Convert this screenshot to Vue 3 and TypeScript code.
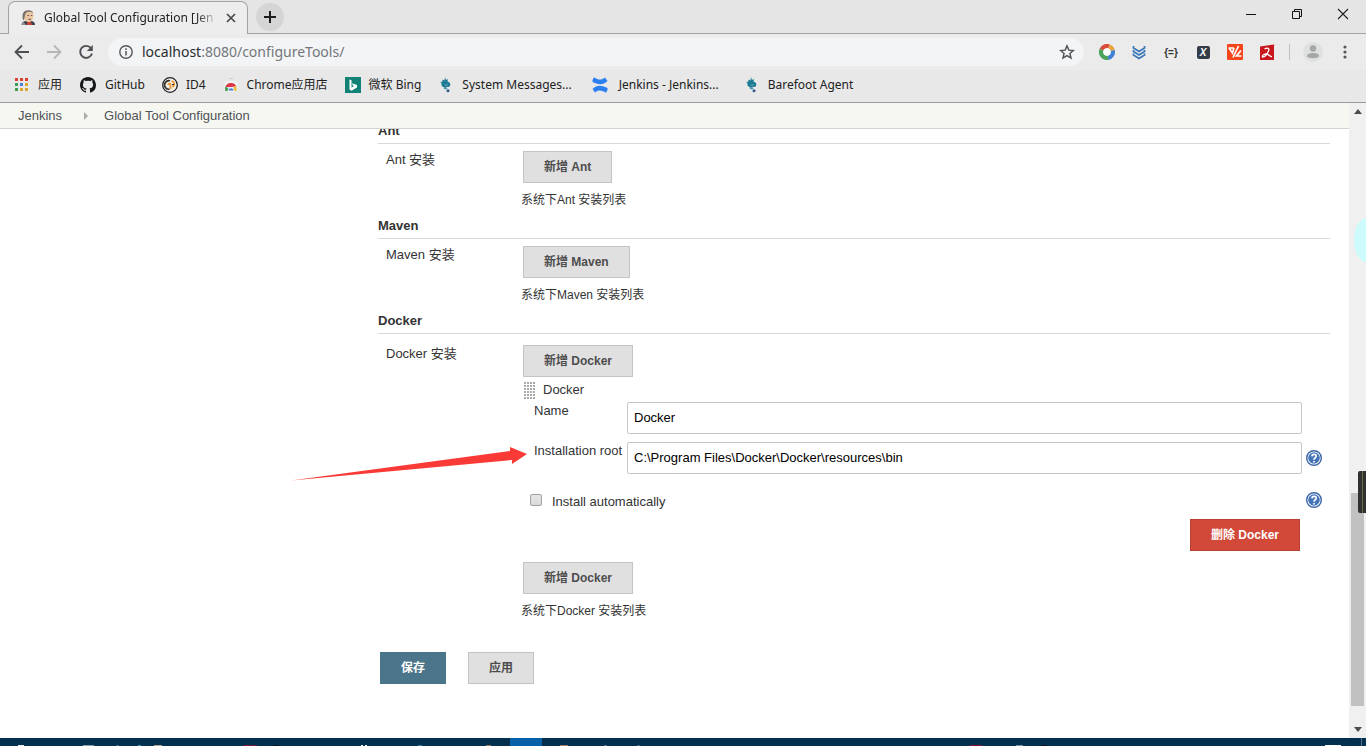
<script setup lang="ts">
import { ref } from 'vue'

interface Bookmark {
  icon: string
  label: string
  slot: string
}

interface TaskMark {
  left: number
  width: number
  color: string
}

const bookmarks: Bookmark[] = [
  { icon: 'apps', label: '应用', slot: 'slot-s' },
  { icon: 'github', label: 'GitHub', slot: 'slot-m' },
  { icon: 'id4', label: 'ID4', slot: 'slot-s' },
  { icon: 'store', label: 'Chrome应用店', slot: 'slot-s' },
  { icon: 'bing', label: '微软 Bing', slot: 'slot-s' },
  { icon: 'barefoot', label: 'System Messages...', slot: 'slot-s' },
  { icon: 'confluence', label: 'Jenkins - Jenkins...', slot: 'slot-l' },
  { icon: 'barefoot', label: 'Barefoot Agent', slot: 'slot-s' },
]

const appColors = ['#d93f35', '#d93f35', '#d93f35', '#3f9a52', '#4a7fe0', '#e0a52c', '#3f9a52', '#e0a52c', '#e0a52c']

const simpleTools = ['Ant', 'Maven']

const taskMarks: TaskMark[] = [
  { left: 1.3, width: 6, color: '#e8eef4' },
  { left: 6.1, width: 11, color: '#8d9daa' },
  { left: 8.5, width: 3, color: '#3f6a8e' },
  { left: 10.1, width: 3, color: '#3e8fc4' },
  { left: 11.3, width: 8, color: '#b3a58c' },
  { left: 17.8, width: 14, color: '#7a1638' },
  { left: 20, width: 6, color: '#07111c' },
  { left: 26.4, width: 2, color: '#ffffff' },
  { left: 26.7, width: 2, color: '#ffffff' },
  { left: 30.6, width: 4, color: '#3a7fb0' },
  { left: 35.6, width: 5, color: '#9a7a5c' },
  { left: 41, width: 8, color: '#a07a6a' },
  { left: 44.2, width: 3, color: '#5d6f80' },
  { left: 46.6, width: 3, color: '#3f6a8e' },
  { left: 71, width: 12, color: '#8a1034' },
  { left: 74.4, width: 7, color: '#7f93a5' },
  { left: 76.2, width: 6, color: '#0a0f18' },
  { left: 97, width: 16, color: '#ffffff' },
]

const name = ref('Docker')
const root = ref('C:\\Program Files\\Docker\\Docker\\resources\\bin')
const auto = ref(false)
</script>

<template>
  <div class="window">
    <header class="chrome">
      <div class="tabs">
        <div class="tab">
          <svg class="favicon" viewBox="0 0 16 16" width="16" height="16" aria-hidden="true">
            <path d="M2 15c0-3 2-4 4-4l5 0c2 0 4 1 4 4z" fill="#3b3f4a" />
            <path d="M7 12h4l1 3H7z" fill="#c8433c" />
            <path d="M3 6C2 2 6 0 9 .5c4 .5 5 3 4.500 6C13 10 11.500 12 9 12 6 12 4 10 3.500 8z" fill="#e9c7a4" />
            <path d="M3 10C1.500 3 4 .3 8.500.3c2.500 0 4 1 4.800 2.700C10 1.300 7 1.500 5.500 3.500c-.8 1.500-.5 3-1.200 4.500L4 10z" fill="#77706a" />
            <path d="M7.500 5.500h1.500M11 5.500h1.200M8.500 9.300h2.500" stroke="#5a3d31" stroke-width=".9" />
            <path d="M1 15l2-4 3 4z" fill="#8d9197" />
          </svg>
          <span class="tab-title">Global Tool Configuration [Jen</span>
          <button class="icon-btn tab-close" aria-label="关闭标签页">
            <svg viewBox="0 0 10 10" width="10" height="10"><path d="M1 1l8 8M9 1L1 9" stroke="#45484b" stroke-width="1.700" /></svg>
          </button>
        </div>
        <button class="icon-btn new-tab" aria-label="新标签页">
          <svg viewBox="0 0 12 12" width="12" height="12"><path d="M6 0v12M0 6h12" stroke="#1c1c1c" stroke-width="2" /></svg>
        </button>
        <div class="window-controls">
          <button class="icon-btn" aria-label="最小化">
            <svg viewBox="0 0 12 12" width="12" height="12"><path d="M1 6.500h10" stroke="#111" /></svg>
          </button>
          <button class="icon-btn" aria-label="还原">
            <svg viewBox="0 0 12 12" width="12" height="12"><path d="M1.500 3.500h7v7h-7zM3.500 3V1.500h7v7H9" fill="none" stroke="#111" /></svg>
          </button>
          <button class="icon-btn" aria-label="关闭">
            <svg viewBox="0 0 12 12" width="12" height="12"><path d="M1 1l10 10M11 1L1 11" stroke="#222" stroke-width="1.100" /></svg>
          </button>
        </div>
      </div>

      <div class="toolbar">
        <button class="icon-btn" aria-label="后退">
          <svg viewBox="0 0 16 16" width="16" height="16"><path d="M15 8H2M8 1.500L1.500 8 8 14.500" fill="none" stroke="#4d5054" stroke-width="1.800" /></svg>
        </button>
        <button class="icon-btn" aria-label="前进">
          <svg viewBox="0 0 16 16" width="16" height="16"><path d="M1 8h13M8 1.500L14.500 8 8 14.500" fill="none" stroke="#b4b6b8" stroke-width="1.800" /></svg>
        </button>
        <button class="icon-btn" aria-label="重新加载">
          <svg viewBox="0 0 16 16" width="16" height="16">
            <path d="M13 4.200A6 6 0 1 0 14 9.500" fill="none" stroke="#4d5054" stroke-width="1.900" />
            <path d="M14.800 1v6H8.800z" fill="#4d5054" />
          </svg>
        </button>
        <div class="address">
          <svg viewBox="0 0 14 14" width="14" height="14" aria-hidden="true">
            <circle cx="7" cy="7" r="6.200" fill="none" stroke="#55585c" stroke-width="1.400" />
            <path d="M7 6v4.500M7 3.300v1.600" stroke="#55585c" stroke-width="1.500" />
          </svg>
          <span class="url"><span class="host">localhost</span>:8080/configureTools/</span>
          <button class="icon-btn star" aria-label="为此网页添加书签">
            <svg viewBox="0 0 16 16" width="16" height="16"><path d="M8 1.800l1.800 4.300 4.600.4-3.500 3 1.100 4.500L8 11.600 4 14l1.100-4.500-3.500-3 4.600-.4z" fill="none" stroke="#4d5054" stroke-width="1.400" /></svg>
          </button>
        </div>
        <div class="extensions">
          <button class="icon-btn" aria-label="彩色圆环扩展">
            <svg viewBox="0 0 16 16" width="16" height="16" fill="none" stroke-width="4.500">
              <path d="M2.700 5.600A5.800 5.800 0 0 1 10 2.500" stroke="#d94b3b" />
              <path d="M10 2.500A5.800 5.800 0 0 1 13.600 6.500" stroke="#e9a23a" />
              <path d="M13.600 6.500A5.800 5.800 0 0 1 9 13.700" stroke="#3f82d6" />
              <path d="M9 13.700A5.800 5.800 0 0 1 2.700 5.600" stroke="#4aa35a" />
              <circle cx="8" cy="8" r="3.800" fill="#fff" stroke="none" />
            </svg>
          </button>
          <button class="icon-btn" aria-label="下载扩展">
            <svg viewBox="0 0 16 16" width="16" height="16" fill="none" stroke="#3a78b8" stroke-width="1.800">
              <path d="M2.500 2v2L8 7.500 13.500 4V2M2.500 6v1.500L8 11l5.500-3.500V6M2.500 9.500V11L8 14.500l5.500-3.500V9.500" />
            </svg>
          </button>
          <button class="icon-btn ext-braces" aria-label="JSON 扩展">{=}</button>
          <button class="icon-btn" aria-label="XPath 扩展"><span class="ext-x">X</span></button>
          <button class="icon-btn" aria-label="切换扩展">
            <svg viewBox="0 0 16 16" width="16" height="16">
              <rect width="16" height="16" rx="1" fill="#f4451c" />
              <path d="M1.500 4H7M2 4l3.500 5L7 4M11.500 2L6 13.500M14 6.500L9.500 12H14.500" fill="none" stroke="#fff" stroke-width="1.700" />
            </svg>
          </button>
          <button class="icon-btn" aria-label="PDF 扩展">
            <svg viewBox="0 0 16 16" width="16" height="16">
              <path d="M1 2.500l14.500-2L15 2v14H1z" fill="#c8161d" />
              <path d="M5.500 5c3-1.500 5-.8 4.200 1.500C8.500 9.500 6 13 3.500 13c-.8-1.500 2-3.300 4.500-3 2 .2 2.500 3 5 2.500" fill="none" stroke="#fff" stroke-width="1.300" />
            </svg>
          </button>
        </div>
        <span class="divider"></span>
        <button class="icon-btn" aria-label="用户">
          <svg viewBox="0 0 20 20" width="20" height="20">
            <circle cx="10" cy="10" r="10" fill="#dfe0e0" />
            <circle cx="10" cy="6.500" r="3.200" fill="#a4a6a8" />
            <path d="M4 14.500c0-3 3-3.500 6-3.500s6 .5 6 3.500c-2 2.300-10 2.300-12 0z" fill="#a4a6a8" />
          </svg>
        </button>
        <button class="icon-btn" aria-label="菜单">
          <svg viewBox="0 0 4 16" width="4" height="16" fill="#55585c"><circle cx="2" cy="3" r="1.600" /><circle cx="2" cy="8" r="1.600" /><circle cx="2" cy="13" r="1.600" /></svg>
        </button>
      </div>

      <nav class="bookmarks" aria-label="书签">
        <a v-for="(b, i) in bookmarks" :key="i" href="#" class="bookmark" :class="{ long: b.slot === 'slot-l' }">
          <span class="slot" :class="b.slot">
            <svg v-if="b.icon === 'apps'" viewBox="0 0 16 16" width="16" height="16">
              <rect v-for="(c, n) in appColors" :key="n" :x="1 + (n % 3) * 5" :y="1 + Math.floor(n / 3) * 5" width="3" height="3" :fill="c" />
            </svg>
            <svg v-else-if="b.icon === 'github'" viewBox="0 0 16 16" width="16" height="16">
              <path fill="#15181b" d="M8 0C3.580 0 0 3.580 0 8c0 3.540 2.290 6.530 5.470 7.590.4.070.55-.17.55-.38 0-.19-.01-.82-.01-1.490-2.010.37-2.530-.49-2.690-.94-.09-.23-.48-.94-.82-1.130-.28-.15-.68-.52-.01-.53.63-.01 1.080.58 1.230.82.72 1.210 1.870.87 2.330.66.07-.52.28-.87.51-1.070-1.780-.2-3.640-.89-3.640-3.950 0-.87.31-1.590.82-2.150-.08-.2-.36-1.020.08-2.120 0 0 .67-.21 2.200.82.64-.18 1.320-.27 2-.27s1.360.09 2 .27c1.530-1.040 2.200-.82 2.200-.82.44 1.100.16 1.920.08 2.120.51.56.82 1.270.82 2.150 0 3.070-1.870 3.750-3.650 3.950.29.25.54.73.54 1.480 0 1.070-.01 1.930-.01 2.200 0 .21.15.46.55.38A8.010 8.010 0 0 0 16 8c0-4.420-3.580-8-8-8z" />
            </svg>
            <svg v-else-if="b.icon === 'id4'" viewBox="0 0 16 16" width="16" height="16" fill="none">
              <circle cx="8" cy="8" r="7.300" fill="#f3f0ea" stroke="#222" stroke-width="1.300" />
              <path d="M8 3.800A4.300 4.300 0 1 0 7.500 12.200" stroke="#33302c" stroke-width="1.700" />
              <path d="M9.500 4c3.500.8 3.500 4.500 1 6M6 8C6 6.300 8.500 6 8.500 7.500V12" stroke="#e9972c" stroke-width="1.700" />
              <path d="M10 7.500h2" stroke="#222" stroke-width="1.200" />
            </svg>
            <svg v-else-if="b.icon === 'store'" viewBox="0 0 16 16" width="16" height="16">
              <path d="M6 1.500h4" stroke="#cfd0d1" />
              <path d="M2 4h12l1 10H1z" fill="#f1f1f1" />
              <path d="M2.500 10A5.800 5.800 0 0 1 13.300 9.500L8 10z" fill="#dc3545" />
              <path d="M2.300 9.500c-.5 1.500-.4 3 0 4.500H6l-.8-3z" fill="#47a05a" />
              <path d="M13.300 9.500c.6 1.500.5 3 .2 4.500H10l.8-4.500z" fill="#ecc03e" />
              <path d="M5 14a3 3.200 0 0 1 6 0z" fill="#4b80d8" stroke="#fff" stroke-width=".8" />
            </svg>
            <svg v-else-if="b.icon === 'bing'" viewBox="0 0 16 16" width="16" height="16">
              <rect width="16" height="16" fill="#128277" />
              <path d="M4.500 2.500l2 .8v7.200L9 9 7.800 8.400 7 6.300l5 1.800v2.500l-5.500 3.200-2-1.200z" fill="#fff" />
            </svg>
            <svg v-else-if="b.icon === 'barefoot'" viewBox="0 0 16 16" width="16" height="16">
              <path d="M7 0l1 3 2-1-.5 2.500C12 5 13 7 12 9c-.8 1.200-2 .8-3 1-1 .8-3 1-4.500-.4C3.500 8.500 3 7.500 3.500 6L2 5l2.300-.3L4.500 2.500 6.500 3.500z" fill="#1f7a96" />
              <path d="M7 7.800c1 .6 1.800.6 2.600-.2" stroke="#8fc4d2" stroke-width=".8" fill="none" />
              <path d="M6 10.500c1 1.500 2 1.500 3 .5" stroke="#4a9db2" stroke-width="1.500" fill="none" />
              <circle cx="10" cy="13.800" r="1.500" fill="#2d5b86" />
            </svg>
            <svg v-else viewBox="0 0 16 16" width="16" height="16">
              <path d="M.5 3L2 .3c4 2.500 7 3.500 11 .3L15.500 4C10 9.500 4.500 6.500.5 5z" fill="#2b7ff0" />
              <path d="M15.500 13L14 15.700c-4-2.500-7-3.500-11-.3L.5 12C6 6.500 11.500 9.500 15.500 11z" fill="#2b7ff0" />
            </svg>
          </span>
          <span>{{ b.label }}</span>
        </a>
      </nav>
    </header>

    <div class="page">
      <div class="viewport">
        <nav class="breadcrumb" aria-label="导航">
          <a href="#">Jenkins</a>
          <svg viewBox="0 0 4 8" width="4" height="8" aria-hidden="true"><path d="M0 0l4 4-4 4z" fill="#aaaca8" /></svg>
          <a href="#">Global Tool Configuration</a>
        </nav>

        <main class="content">
          <form class="config" @submit.prevent>
            <section v-for="tool in simpleTools" :key="tool">
              <h2>{{ tool }}</h2>
              <div class="entry">
                <div class="entry-label">{{ tool }} 安装</div>
                <div class="entry-body">
                  <button type="button" class="btn">新增 {{ tool }}</button>
                  <p class="hint">系统下{{ tool }} 安装列表</p>
                </div>
              </div>
            </section>

            <section>
              <h2>Docker</h2>
              <div class="entry entry-docker">
                <div class="entry-label">Docker 安装</div>
                <div class="entry-body">
                  <button type="button" class="btn">新增 Docker</button>
                  <div class="installer">
                    <div class="grip-row"><span class="grip"></span>Docker</div>
                    <div class="field">
                      <label for="tool-name">Name</label>
                      <input id="tool-name" v-model="name" type="text" />
                      <span class="help"></span>
                    </div>
                    <div class="field">
                      <label for="tool-root">Installation root</label>
                      <input id="tool-root" v-model="root" type="text" />
                      <button type="button" class="help" aria-label="Installation root 帮助">
                        <svg viewBox="0 0 16 16" width="16" height="16">
                          <circle cx="8" cy="8" r="7.300" fill="#fff" stroke="#3c66a8" stroke-width="1.400" />
                          <circle cx="8" cy="8" r="5.800" fill="#4473b8" />
                          <path d="M5.900 6.400C6 3.600 10.300 3.700 10.200 6.200 10.100 7.700 8 7.900 8 9.800M8 11v1.600" fill="none" stroke="#fff" stroke-width="1.700" />
                        </svg>
                      </button>
                    </div>
                    <div class="check-row">
                      <label><input v-model="auto" type="checkbox" />Install automatically</label>
                      <button type="button" class="help" aria-label="Install automatically 帮助">
                        <svg viewBox="0 0 16 16" width="16" height="16">
                          <circle cx="8" cy="8" r="7.300" fill="#fff" stroke="#3c66a8" stroke-width="1.400" />
                          <circle cx="8" cy="8" r="5.800" fill="#4473b8" />
                          <path d="M5.900 6.400C6 3.600 10.300 3.700 10.200 6.200 10.100 7.700 8 7.900 8 9.800M8 11v1.600" fill="none" stroke="#fff" stroke-width="1.700" />
                        </svg>
                      </button>
                    </div>
                    <div class="delete-row">
                      <button type="button" class="btn btn-danger">删除 Docker</button>
                    </div>
                  </div>
                  <button type="button" class="btn">新增 Docker</button>
                  <p class="hint">系统下Docker 安装列表</p>
                </div>
                <svg class="arrow" viewBox="0 0 236 38" width="236" height="38" aria-hidden="true">
                  <path d="M0 34.500L219 5V1l17 7-15 10v-4z" fill="#f93a36" />
                </svg>
              </div>
            </section>

            <div class="actions">
              <button type="submit" class="btn btn-primary">保存</button>
              <button type="button" class="btn">应用</button>
            </div>
          </form>
        </main>
      </div>

      <div class="scrollbar" aria-hidden="true">
        <span class="scroll-arrow"><svg viewBox="0 0 8 5" width="8" height="5"><path d="M0 5l4-5 4 5z" fill="#4a4c4e" /></svg></span>
        <span class="track-before"></span>
        <span class="thumb"></span>
        <span class="track-after"></span>
        <span class="scroll-arrow"><svg viewBox="0 0 8 5" width="8" height="5"><path d="M0 0l4 5 4-5z" fill="#4a4c4e" /></svg></span>
        <span class="bubble"></span>
        <span class="meter"></span>
      </div>
    </div>

    <footer class="taskbar" aria-hidden="true">
      <span class="task-active"></span>
      <span v-for="(m, i) in taskMarks" :key="i" class="mark" :style="{ left: m.left + '%', width: m.width + 'px', background: m.color }"></span>
      <span class="show-desktop"></span>
    </footer>
  </div>
</template>

<style>
body {
  margin: 0;
  background: #fff;
}
</style>

<style scoped>
.window {
  display: flex;
  flex-direction: column;
  height: 100vh;
  overflow: hidden;
  font: 13px/20px "Liberation Sans", "Noto Sans CJK SC", sans-serif;
  color: #333;
}

a {
  color: inherit;
  text-decoration: none;
}

svg {
  display: block;
  flex: none;
}

.icon-btn {
  display: flex;
  align-items: center;
  justify-content: center;
  flex: none;
  width: 32px;
  height: 32px;
  padding: 0;
  border: 0;
  background: none;
}

/* browser frame */
.chrome {
  flex: none;
  background: #e8e8e8;
  border-bottom: 1px solid #9b9b9b;
  font-family: "Noto Sans", "Noto Sans CJK SC", sans-serif;
  color: #222;
}

.tabs {
  display: flex;
  height: 34px;
  padding-left: 8px;
  background: #e5e5e5;
  box-shadow: inset 0 -1px #a3a3a3;
}

.tab {
  display: flex;
  align-items: center;
  box-sizing: border-box;
  width: 240px;
  margin-top: 1px;
  padding: 0 9px 0 11px;
  border: 1px solid #a3a3a3;
  border-bottom: 0;
  border-radius: 7px 7px 0 0;
  background: #ededed;
}

.tab-title {
  flex: 1;
  min-width: 0;
  margin-left: 8px;
  white-space: nowrap;
  font-size: 12px;
  mask-image: linear-gradient(to right, #000 88%, transparent);
}

.tab-close {
  width: 14px;
  margin-left: 6px;
}

.new-tab {
  width: 28px;
  height: 28px;
  margin: 3px 0 0 8px;
  border-radius: 50%;
  background: #d5d5d5;
}

.window-controls {
  display: flex;
  margin-left: auto;
}

.window-controls .icon-btn {
  width: 46px;
  height: 28px;
}

.toolbar {
  display: flex;
  align-items: center;
  height: 36px;
  padding: 0 5px 0 6px;
  background: #ebebeb;
}

.address {
  display: flex;
  align-items: center;
  flex: 1;
  height: 28px;
  margin: 0 7px 0 6px;
  padding: 0 1px 0 11px;
  border-radius: 14px;
  background: #f3f4f5;
}

.url {
  flex: 1;
  margin-left: 9px;
  font-size: 14px;
  color: #74777b;
}

.host {
  color: #2b2d30;
}

.extensions {
  display: flex;
}

.ext-braces {
  font: bold 10px "Liberation Sans", sans-serif;
  color: #333;
}

.ext-x {
  width: 13px;
  height: 13px;
  border-radius: 2px;
  background: #333d47;
  color: #fff;
  font: italic bold 10px/13px "Liberation Sans", sans-serif;
}

.divider {
  width: 1px;
  height: 16px;
  margin: 0 7px 0 6px;
  background: #bfc0c1;
}

.bookmarks {
  display: flex;
  align-items: center;
  gap: 17px;
  height: 30px;
  padding: 0 14px 2px;
  font-size: 12px;
  white-space: nowrap;
}

.bookmark {
  display: flex;
  align-items: center;
  gap: 8px;
}

.long {
  min-width: 138px;
}

.slot {
  display: flex;
  justify-content: center;
}

.slot-s {
  width: 16px;
}

.slot-m {
  width: 18px;
}

.slot-l {
  width: 22px;
}

/* page */
.page {
  display: flex;
  flex: 1;
  min-height: 0;
}

.viewport {
  flex: 1;
  min-width: 0;
  overflow: hidden;
}

.breadcrumb {
  position: relative;
  display: flex;
  align-items: center;
  height: 25px;
  padding-left: 18px;
  border-bottom: 1px solid #d3d4d0;
  background: #f6f7f1;
  color: #4f5357;
}

.breadcrumb svg {
  margin: 0 16px 0 22px;
}

.config {
  margin-top: -9px;
  padding: 0 19px 0 378px;
}

h2 {
  margin: 0;
  padding-bottom: 1px;
  border-bottom: 1px solid #d8d9d9;
  font-size: 13px;
  line-height: 22px;
}

.entry {
  display: flex;
  padding: 5px 0 6px 8px;
}

.entry-label {
  flex: none;
  width: 135px;
  line-height: 22px;
}

.entry-body {
  flex: 1;
  min-width: 0;
  padding-top: 2px;
}

.entry-docker {
  position: relative;
  padding-top: 9px;
}

.btn {
  display: block;
  height: 32px;
  margin: 0 0 0 2px;
  padding: 0 20px;
  border: 1px solid #c4c4c4;
  border-radius: 0;
  background: #e0e0e0;
  color: #4d4d4d;
  font: bold 12px/18px "Liberation Sans", "Noto Sans CJK SC", sans-serif;
}

.btn-primary {
  border-color: #4b758b;
  background: #4b758b;
  color: #fff;
}

.btn-danger {
  border-color: #b94134;
  background: #d24939;
  color: #fff;
}

.hint {
  margin: 8px 0 0;
  font-size: 12px;
  line-height: 18px;
}

.installer {
  padding: 3px 8px 11px 0;
}

.grip-row {
  display: flex;
  align-items: center;
  gap: 7px;
  margin-left: 3px;
}

.grip {
  width: 12px;
  height: 17px;
  background-image: radial-gradient(circle at 1px 1px, #aaa 1px, transparent 1px);
  background-size: 3px 3px;
}

.field {
  display: flex;
  margin: 2px 0 8px 13px;
}

.field + .field {
  margin-top: 0;
}

.field label {
  flex: none;
  width: 93px;
  line-height: 18px;
}

.field input {
  flex: 1;
  min-width: 0;
  box-sizing: border-box;
  height: 32px;
  padding: 0 6px 2px;
  border: 1px solid #c6c6c6;
  border-radius: 2px;
  background: #fff;
  color: #000;
  font: inherit;
}

.help {
  align-self: center;
  flex: none;
  width: 16px;
  margin-left: 4px;
  padding: 0;
  border: 0;
  background: none;
}

.check-row {
  display: flex;
  justify-content: space-between;
  height: 24px;
  margin: 14px 0 7px 9px;
}

.check-row label {
  display: flex;
  align-items: center;
  padding-top: 3px;
}

.check-row input {
  appearance: none;
  box-sizing: border-box;
  width: 12px;
  height: 12px;
  margin: 0 10px 4px 0;
  border: 1px solid #9fa1a3;
  border-radius: 2px;
  background: linear-gradient(#e6e6e6, #d9d9d9);
}

.delete-row {
  display: flex;
  justify-content: flex-end;
  padding-right: 22px;
}

.arrow {
  position: absolute;
  left: -87px;
  top: 112px;
}

.actions {
  display: flex;
  gap: 20px;
  margin-top: 26px;
}

/* scrollbar */
.scrollbar {
  position: relative;
  display: flex;
  flex-direction: column;
  flex: none;
  width: 17px;
  background: #f0f0f1;
}

.scroll-arrow {
  display: flex;
  align-items: center;
  justify-content: center;
  flex: none;
  height: 17px;
}

.track-before {
  flex: 373;
}

.thumb {
  flex: 213;
  margin: 0 2px;
  background: #c1c1c1;
}

.track-after {
  flex: 15;
}

.bubble {
  position: absolute;
  top: 115px;
  right: 0;
  width: 12px;
  height: 44px;
  border-radius: 12px 0 0 12px / 22px 0 0 22px;
  background: #cdfafa;
}

.meter {
  position: absolute;
  top: 368px;
  right: 0;
  width: 8px;
  height: 42px;
  border-radius: 2px 0 0 2px;
  background: linear-gradient(to right, transparent 4px, #77714f 4px, #4d6b46 5px, transparent 5px), #303030;
}

/* taskbar */
.taskbar {
  position: relative;
  flex: none;
  height: 8px;
  background: #04304f;
}

.mark {
  position: absolute;
  bottom: 0;
  height: 1px;
}

.task-active {
  position: absolute;
  left: 37.3%;
  bottom: 0;
  width: 32px;
  height: 8px;
  background: #0560a8;
}

.show-desktop {
  position: absolute;
  right: 4px;
  bottom: 0;
  width: 1px;
  height: 8px;
  background: #56728a;
}
</style>
